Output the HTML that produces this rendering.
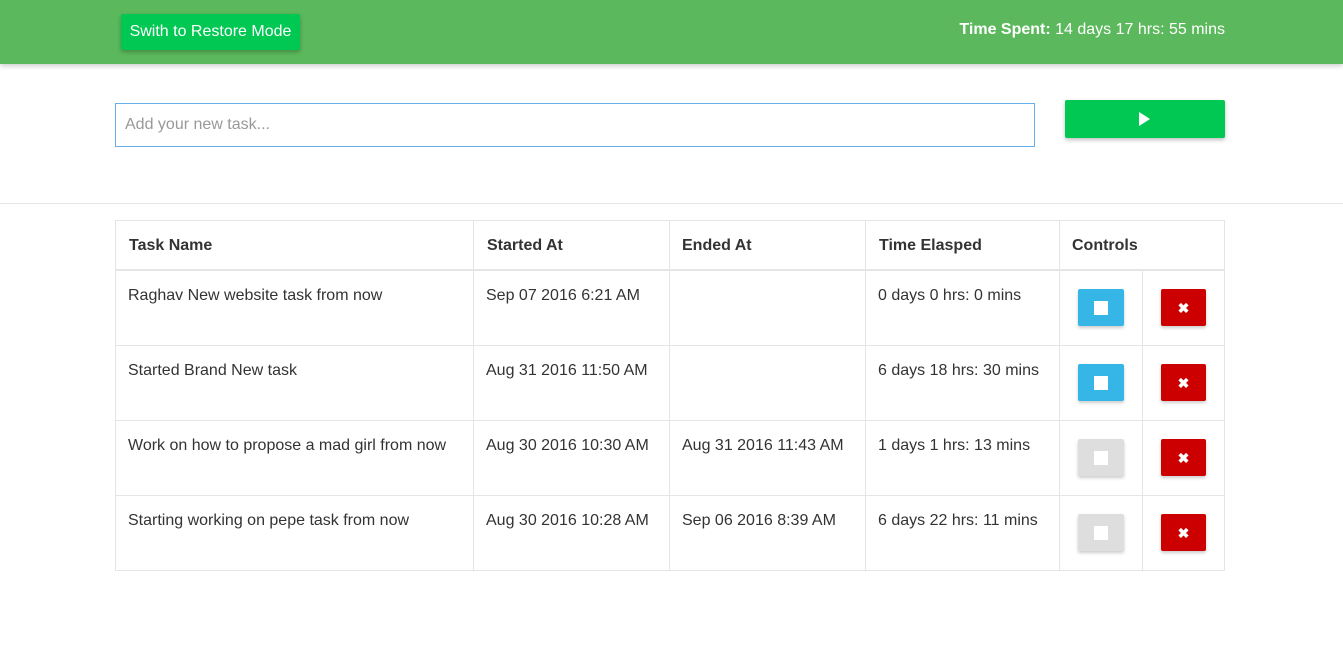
<!DOCTYPE html>
<html><head><style>
*{margin:0;padding:0;box-sizing:border-box}
body{width:1343px;height:661px;background:#fff;font-family:"Liberation Sans",Arial,sans-serif;color:#333;position:relative;overflow:hidden}
.top{position:absolute;left:0;top:0;width:1343px;height:64px;background:#5cb85c;box-shadow:0 2px 5px rgba(0,0,0,.2)}
.sw{position:absolute;left:121px;top:14px;width:179px;height:36px;background:#00c853;color:#fff;font-size:16px;line-height:36px;text-align:center;border-radius:2px;box-shadow:0 2px 4px rgba(0,0,0,.25)}
.ts{position:absolute;right:118px;top:21px;color:#fff;font-size:16px}
.inp{position:absolute;left:115px;top:103px;width:920px;height:44px;border:1px solid #66afe9;color:#999;font-size:16px;padding:12px 9px}
.play{position:absolute;left:1065px;top:100px;width:160px;height:38px;background:#00c853;border-radius:2px;box-shadow:0 2px 4px rgba(0,0,0,.25)}
.hr{position:absolute;left:0;top:203px;width:1343px;height:1px;background:#e5e5e5}
.tb{position:absolute;left:115px;top:220px;width:1110px;height:351px;border:1px solid #e5e5e5}
.v{position:absolute;top:220px;height:351px;width:1px;background:#e5e5e5}
.h{position:absolute;left:115px;width:1110px;height:1px;background:#e5e5e5}
.t{position:absolute;font-size:16px;white-space:nowrap}
.b{font-weight:bold}
.btn{position:absolute;width:46px;height:37px;border-radius:2px;box-shadow:0 2px 3px rgba(0,0,0,.2)}
.btn i{position:absolute;left:16px;top:12px;width:14px;height:14px;background:#fff}
.x{position:absolute;left:0;top:1px;width:45px;height:37px;color:#fff;font-weight:bold;font-size:14px;text-align:center;line-height:37px}
</style></head><body>
<div class="top"><div class="sw">Swith to Restore Mode</div><div class="ts"><b>Time Spent:</b> 14 days 17 hrs: 55 mins</div></div>
<div class="inp">Add your new task...</div>
<div class="play"><svg width="160" height="38"><polygon points="74,12 74,26 85,19" fill="#fff"/></svg></div>
<div class="hr"></div>
<div class="tb"></div>
<div class="v" style="left:473px"></div><div class="v" style="left:669px"></div><div class="v" style="left:865px"></div><div class="v" style="left:1059px"></div><div class="v" style="left:1142px;top:270px;height:301px"></div>
<div class="h" style="top:269px;height:2px"></div><div class="h" style="top:345px"></div><div class="h" style="top:420px"></div><div class="h" style="top:495px"></div>
<div class="t b" style="left:129px;top:237px">Task Name</div><div class="t b" style="left:487px;top:237px">Started At</div><div class="t b" style="left:682px;top:237px">Ended At</div><div class="t b" style="left:879px;top:237px">Time Elasped</div><div class="t b" style="left:1072px;top:237px">Controls</div>

<div class="t" style="left:128px;top:287px">Raghav New website task from now</div><div class="t" style="left:486px;top:287px">Sep 07 2016 6:21 AM</div><div class="t" style="left:878px;top:287px">0 days 0 hrs: 0 mins</div>
<div class="t" style="left:128px;top:362px">Started Brand New task</div><div class="t" style="left:486px;top:362px">Aug 31 2016 11:50 AM</div><div class="t" style="left:878px;top:362px">6 days 18 hrs: 30 mins</div>
<div class="t" style="left:128px;top:437px">Work on how to propose a mad girl from now</div><div class="t" style="left:486px;top:437px">Aug 30 2016 10:30 AM</div><div class="t" style="left:682px;top:437px">Aug 31 2016 11:43 AM</div><div class="t" style="left:878px;top:437px">1 days 1 hrs: 13 mins</div>
<div class="t" style="left:128px;top:512px">Starting working on pepe task from now</div><div class="t" style="left:486px;top:512px">Aug 30 2016 10:28 AM</div><div class="t" style="left:682px;top:512px">Sep 06 2016 8:39 AM</div><div class="t" style="left:878px;top:512px">6 days 22 hrs: 11 mins</div>

<div class="btn" style="left:1078px;top:289px;background:#35b6e6"><i></i></div>
<div class="btn" style="left:1078px;top:364px;background:#35b6e6"><i></i></div>
<div class="btn" style="left:1078px;top:439px;background:#dedede"><i></i></div>
<div class="btn" style="left:1078px;top:514px;background:#dedede"><i></i></div>
<div class="btn" style="left:1161px;top:289px;background:#cc0000;width:45px"><span class="x">✖</span></div>
<div class="btn" style="left:1161px;top:364px;background:#cc0000;width:45px"><span class="x">✖</span></div>
<div class="btn" style="left:1161px;top:439px;background:#cc0000;width:45px"><span class="x">✖</span></div>
<div class="btn" style="left:1161px;top:514px;background:#cc0000;width:45px"><span class="x">✖</span></div>
</body></html>
